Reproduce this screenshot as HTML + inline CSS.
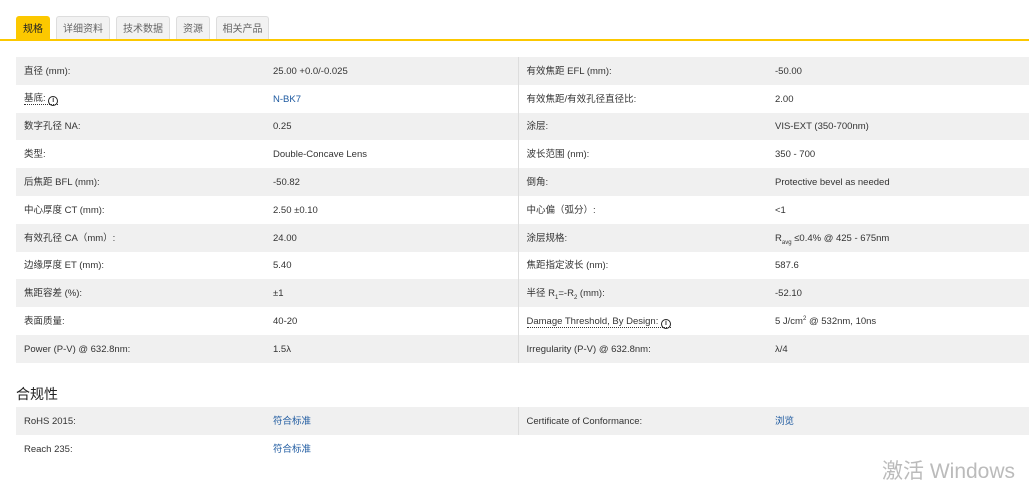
<!DOCTYPE html>
<html><head><meta charset="utf-8"><style>
body{margin:0;width:1029px;height:486px;overflow:hidden;background:#fff;font-family:"Liberation Sans","Noto Sans CJK SC",sans-serif;font-size:9.5px;color:#333;position:relative}
.tab{position:absolute;top:16px;height:24px;line-height:25px;box-sizing:border-box;background:#f2f2f2;border:1px solid #ddd;border-bottom:none;border-radius:3px 3px 0 0;color:#666;font-size:10px;text-align:center}
.tab.on{background:#fcc800;border-color:#fcc800;color:#222}
.line{position:absolute;left:0;right:0;top:39px;height:2px;background:#fcc800}
table{position:absolute;left:16px;border-collapse:collapse;width:1013px;table-layout:fixed}
td{height:27.8px;padding:2px 0 0 8px;white-space:nowrap;overflow:hidden;line-height:12px;vertical-align:middle;box-sizing:border-box}
tr:nth-child(odd) td{background:#f0f0f0}
td:nth-child(3){border-left:1px solid #ddd}
col.a{width:249px}col.b{width:253px}col.c{width:249px}
a{color:#1e5aa0;text-decoration:none}
.dot{border-bottom:1px dotted #333}
.i{display:inline-block;width:8px;height:8px;border:1.3px solid #222;border-radius:50%;font-size:7px;line-height:8px;text-align:center;font-weight:bold;vertical-align:-1px}
h3{position:absolute;left:16px;top:384px;margin:0;font-size:14px;font-weight:normal;color:#222}
.wm{position:absolute;left:882px;top:455px;font-size:21px;color:#bbb}
sub,sup{font-size:6px;line-height:0}
</style></head><body>
<div class="tab on" style="left:16px;width:34px">规格</div>
<div class="tab" style="left:56px;width:54px">详细资料</div>
<div class="tab" style="left:116px;width:54px">技术数据</div>
<div class="tab" style="left:176px;width:34px">资源</div>
<div class="tab" style="left:216px;width:53px">相关产品</div>
<div class="line"></div>
<table style="top:57px"><colgroup><col class="a"><col class="b"><col class="c"><col></colgroup>
<tr><td>直径 (mm):</td><td>25.00 +0.0/-0.025</td><td>有效焦距 EFL (mm):</td><td>-50.00</td></tr>
<tr><td><span class="dot">基底: <span class="i">i</span></span></td><td><a>N-BK7</a></td><td>有效焦距/有效孔径直径比:</td><td>2.00</td></tr>
<tr><td>数字孔径 NA:</td><td>0.25</td><td>涂层:</td><td>VIS-EXT (350-700nm)</td></tr>
<tr><td>类型:</td><td>Double-Concave Lens</td><td>波长范围 (nm):</td><td>350 - 700</td></tr>
<tr><td>后焦距 BFL (mm):</td><td>-50.82</td><td>倒角:</td><td>Protective bevel as needed</td></tr>
<tr><td>中心厚度 CT (mm):</td><td>2.50 ±0.10</td><td>中心偏（弧分）:</td><td>&lt;1</td></tr>
<tr><td>有效孔径 CA（mm）:</td><td>24.00</td><td>涂层规格:</td><td>R<sub>avg</sub> ≤0.4% @ 425 - 675nm</td></tr>
<tr><td>边缘厚度 ET (mm):</td><td>5.40</td><td>焦距指定波长 (nm):</td><td>587.6</td></tr>
<tr><td>焦距容差 (%):</td><td>±1</td><td>半径 R<sub>1</sub>=-R<sub>2</sub> (mm):</td><td>-52.10</td></tr>
<tr><td>表面质量:</td><td>40-20</td><td><span class="dot">Damage Threshold, By Design: <span class="i">i</span></span></td><td>5 J/cm<sup>2</sup> @ 532nm, 10ns</td></tr>
<tr><td>Power (P-V) @ 632.8nm:</td><td>1.5λ</td><td>Irregularity (P-V) @ 632.8nm:</td><td>λ/4</td></tr>
</table>
<h3>合规性</h3>
<table style="top:407px"><colgroup><col class="a"><col class="b"><col class="c"><col></colgroup>
<tr><td>RoHS 2015:</td><td><a>符合标准</a></td><td>Certificate of Conformance:</td><td><a>浏览</a></td></tr>
<tr><td>Reach 235:</td><td><a>符合标准</a></td><td style="border:none"></td><td></td></tr>
</table>
<div class="wm">激活 Windows</div>
</body></html>
